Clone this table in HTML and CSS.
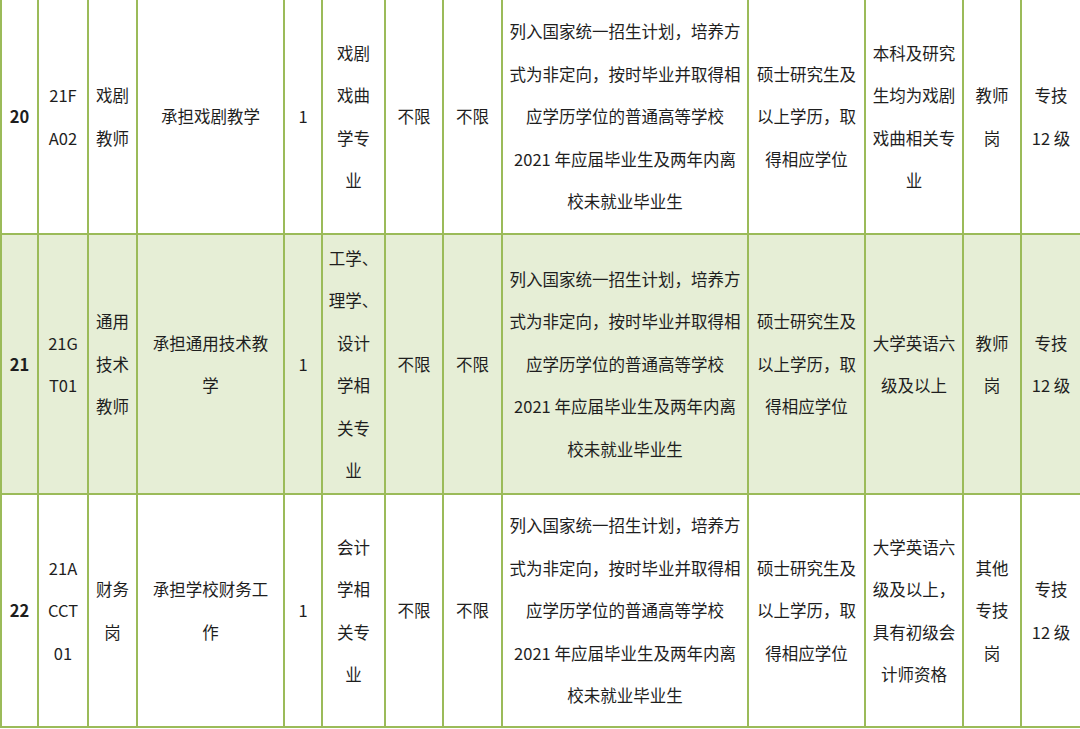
FILE: index.html
```html
<!DOCTYPE html>
<html lang="zh-CN">
<head>
<meta charset="utf-8">
<title>招聘岗位表</title>
<link rel="stylesheet" href="styles.css">
</head>
<body>
<table class="jobs">
  <colgroup>
    <col class="c1"><col class="c2"><col class="c3"><col class="c4"><col class="c5"><col class="c6"><col class="c7"><col class="c8"><col class="c9"><col class="c10"><col class="c11"><col class="c12"><col class="c13">
  </colgroup>
  <tbody>
    <tr class="r1">
      <td class="num">20</td>
      <td>21F<br>A02</td>
      <td>戏剧<br>教师</td>
      <td>承担戏剧教学</td>
      <td>1</td>
      <td>戏剧<br>戏曲<br>学专<br>业</td>
      <td>不限</td>
      <td>不限</td>
      <td>列入国家统一招生计划，培养方<br>式为非定向，按时毕业并取得相<br>应学历学位的普通高等学校<br>2021 年应届毕业生及两年内离<br>校未就业毕业生</td>
      <td>硕士研究生及<br>以上学历，取<br>得相应学位</td>
      <td>本科及研究<br>生均为戏剧<br>戏曲相关专<br>业</td>
      <td>教师<br>岗</td>
      <td>专技<br>12 级</td>
    </tr>
    <tr class="r2 alt">
      <td class="num">21</td>
      <td>21G<br>T01</td>
      <td>通用<br>技术<br>教师</td>
      <td>承担通用技术教<br>学</td>
      <td>1</td>
      <td>工学、<br>理学、<br>设计<br>学相<br>关专<br>业</td>
      <td>不限</td>
      <td>不限</td>
      <td>列入国家统一招生计划，培养方<br>式为非定向，按时毕业并取得相<br>应学历学位的普通高等学校<br>2021 年应届毕业生及两年内离<br>校未就业毕业生</td>
      <td>硕士研究生及<br>以上学历，取<br>得相应学位</td>
      <td>大学英语六<br>级及以上</td>
      <td>教师<br>岗</td>
      <td>专技<br>12 级</td>
    </tr>
    <tr class="r3">
      <td class="num">22</td>
      <td>21A<br>CCT<br>01</td>
      <td>财务<br>岗</td>
      <td>承担学校财务工<br>作</td>
      <td>1</td>
      <td>会计<br>学相<br>关专<br>业</td>
      <td>不限</td>
      <td>不限</td>
      <td>列入国家统一招生计划，培养方<br>式为非定向，按时毕业并取得相<br>应学历学位的普通高等学校<br>2021 年应届毕业生及两年内离<br>校未就业毕业生</td>
      <td>硕士研究生及<br>以上学历，取<br>得相应学位</td>
      <td>大学英语六<br>级及以上，<br>具有初级会<br>计师资格</td>
      <td>其他<br>专技<br>岗</td>
      <td>专技<br>12 级</td>
    </tr>
  </tbody>
</table>
</body>
</html>
```

FILE: styles.css
```css
html, body {
  margin: 0;
  padding: 0;
  background: #ffffff;
}

.jobs {
  border-collapse: collapse;
  table-layout: fixed;
  width: 1080px;
  font-family: "Noto Sans CJK SC", "Noto Sans", sans-serif;
  font-size: 16.5px;
  line-height: 42.5px;
  color: #1e1e1e;
}

.jobs td {
  border: 2px solid #9bbb59;
  padding: 0;
  text-align: center;
  vertical-align: middle;
  white-space: nowrap;
  overflow: hidden;
}

.jobs tr.r1 td {
  border-top: none;
}

.r1 { height: 234px; }
.r2 { height: 260px; }
.r3 { height: 233px; }

.alt td {
  background: #e6eed6;
}

.jobs td.num {
  font-weight: bold;
}

.c1 { width: 37px; }
.c2 { width: 50px; }
.c3 { width: 49px; }
.c4 { width: 147px; }
.c5 { width: 38px; }
.c6 { width: 63px; }
.c7 { width: 58px; }
.c8 { width: 59px; }
.c9 { width: 246px; }
.c10 { width: 117px; }
.c11 { width: 98px; }
.c12 { width: 58px; }
.c13 { width: 60px; }
```
